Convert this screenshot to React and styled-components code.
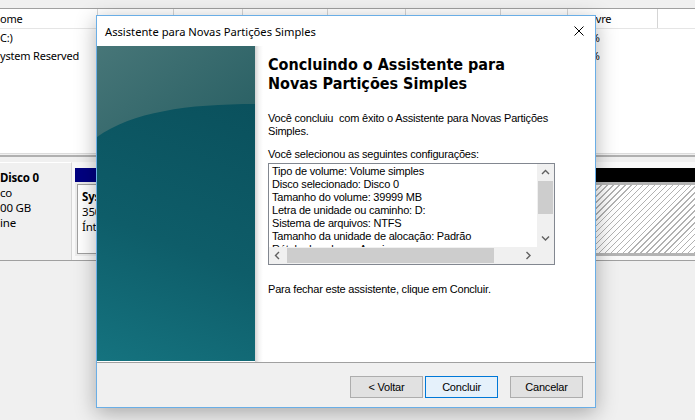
import React from 'react'
import styled, { createGlobalStyle } from 'styled-components'

const GlobalStyle = createGlobalStyle`
  html, body { margin: 0; padding: 0; background: #f0f0f0; }
  body { font-family: "Noto Sans", "Open Sans", sans-serif; }
`

const cols = '98px 76px 69px 85px 78px 95px 67px 90px 1fr'

const Screen = styled.div`
  position: relative;
  width: 695px;
  height: 420px;
  overflow: hidden;
  background: #f0f0f0;
  font-family: "Noto Sans", sans-serif;
  font-size: 11px;
  letter-spacing: -0.2px;
  color: #000;
`

const TopStrip = styled.div`
  height: 8px;
  background: #f0f0f0;
`

const HeaderRow = styled.div`
  display: grid;
  grid-template-columns: ${cols};
  height: 19px;
  background: #fff;
  border-top: 1px solid #a0a0a0;
  border-bottom: 1px solid #e5e5e5;
`

const Cell = styled.div`
  border-right: ${p => (p.$line ? '1px solid #d5d5d5' : 'none')};
  padding-left: ${p => p.$pad || 0}px;
  line-height: ${p => p.$h || 19}px;
  white-space: nowrap;
  overflow: hidden;
`

const ListBody = styled.div`
  height: 124px;
  background: #fff;
`

const Row = styled.div`
  display: grid;
  grid-template-columns: ${cols};
  height: 18px;
`

const Splitter = styled.div`
  height: 9px;
  box-sizing: border-box;
  border-top: 1px solid #dcdcdc;
  padding-top: 1px;
  &::before {
    content: '';
    display: block;
    height: 2px;
    background: #b0b0b0;
  }
`

const DiskRow = styled.div`
  display: flex;
  height: 98px;
  border-bottom: 1px solid #a0a0a0;
`

const DiskInfo = styled.div`
  width: 72px;
  box-sizing: border-box;
  border-right: 1px solid #d6d6d6;
  border-top: 1px solid #fff;
  padding-top: 7px;
  line-height: 15px;
  font-size: 11.5px;
`

const Bold = styled.div`
  font-weight: bold;
`

const Partitions = styled.div`
  flex: 1;
  display: flex;
  padding: 6px 0 4px 3px;
  background: #f9f9f9;
`

const Partition = styled.div`
  display: flex;
  flex-direction: column;
  width: ${p => (p.$w ? `${p.$w}px` : 'auto')};
  flex: ${p => (p.$w ? 'none' : 1)};
  overflow: hidden;
`

const PartBar = styled.div`
  height: 14px;
  background: ${p => p.$color};
`

const PartBody = styled.div`
  flex: 1;
  display: flex;
  padding: 2px;
  background: #ececec;
`

const PartContent = styled.div`
  flex: 1;
  border: 1px solid #a0a0a0;
  background: #fff;
  padding: 4px 4px 0;
  line-height: 15px;
  font-size: 11.5px;
  white-space: nowrap;
  overflow: hidden;
`

const Hatch = styled.div`
  flex: 1;
  border-top: 3px solid #b4b4b4;
  border-bottom: 3px solid #b4b4b4;
  background: repeating-linear-gradient(135deg, #b2b2b2 0 1px, #fff 1px 4.2px);
`

/* dialog */

const Dialog = styled.div`
  position: absolute;
  left: 96px;
  top: 15px;
  width: 500px;
  height: 393px;
  box-sizing: border-box;
  border: 1px solid #6aaee6;
  background: #fff;
  box-shadow: 0 5px 20px rgba(0, 0, 0, 0.3);
  display: flex;
  flex-direction: column;
  letter-spacing: 0;
`

const TitleBar = styled.div`
  height: 30px;
  display: flex;
  align-items: center;
  justify-content: space-between;
  padding: 0 11px 0 8px;
  font-family: "Noto Sans", sans-serif;
  font-size: 11.2px;
`

const Body = styled.div`
  flex: 1;
  display: flex;
  min-height: 0;
`

const Banner = styled.div`
  width: 158px;
  flex: none;
  svg { display: block; }
`

const Content = styled.div`
  flex: 1;
  padding: 9px 12px 0 13px;
  background: linear-gradient(to right, #d4d4d4, #f4f4f4 4px, #fff 8px);
  font-family: "Liberation Sans", Arial, sans-serif;
  font-size: 11px;
  letter-spacing: -0.2px;
  line-height: 13px;
`

const Heading = styled.h1`
  margin: 0;
  font-family: "DejaVu Sans Condensed", "DejaVu Sans", Verdana, sans-serif;
  font-stretch: semi-condensed;
  font-weight: bold;
  font-size: 16px;
  line-height: 19px;
  letter-spacing: 0;
`

const Text = styled.p`
  margin: ${p => p.$top || 0}px 0 0;
`

const ListBox = styled.div`
  margin-top: 2px;
  width: 287px;
  height: 102px;
  box-sizing: border-box;
  border: 1px solid #828790;
  display: grid;
  grid-template-columns: 1fr 17px;
  grid-template-rows: 1fr 17px;
`

const ListText = styled.div`
  overflow: hidden;
  padding: 1px 3px 0;
  white-space: nowrap;
`

const VScroll = styled.div`
  background: #f0f0f0;
  display: flex;
  flex-direction: column;
`

const HScroll = styled.div`
  background: #f0f0f0;
  display: flex;
`

const Arrow = styled.div`
  width: 17px;
  height: 17px;
  flex: none;
  display: flex;
  align-items: center;
  justify-content: center;
`

const VThumb = styled.div`
  height: 33px;
  margin: 0 1px;
  background: #cdcdcd;
`

const HThumb = styled.div`
  width: 207px;
  margin: 1px 0 1px 1px;
  background: #cdcdcd;
`

const Spacer = styled.div`
  flex: 1;
`

const Corner = styled.div`
  background: #f0f0f0;
`

const Footer = styled.div`
  height: 45px;
  flex: none;
  box-sizing: border-box;
  border-top: 1px solid #a0a0a0;
  background: #f0f0f0;
  display: flex;
  justify-content: flex-end;
  align-items: flex-start;
  padding: 13px 12px 0 0;
`

const Button = styled.button`
  width: 73px;
  height: 22px;
  box-sizing: border-box;
  margin-left: ${p => p.$gap || 0}px;
  padding: 0;
  border: 1px solid ${p => (p.$primary ? '#0078d7' : '#adadad')};
  background: ${p => (p.$primary ? '#e5f1fb' : '#e1e1e1')};
  font-family: "Liberation Sans", Arial, sans-serif;
  font-size: 11px;
  letter-spacing: -0.2px;
  color: #000;
`

const Chevron = ({ dir }) => {
  const pts = {
    up: '1,5 4.5,1.5 8,5',
    down: '1,1.5 4.5,5 8,1.5',
    left: '5,1 1.5,4.5 5,8',
    right: '1.5,1 5,4.5 1.5,8',
  }[dir]
  const vertical = dir === 'up' || dir === 'down'
  return (
    <svg width={vertical ? 9 : 7} height={vertical ? 7 : 9} viewBox={vertical ? '0 0 9 7' : '0 0 7 9'}>
      <polyline points={pts} fill="none" stroke="#606060" strokeWidth="1.4" />
    </svg>
  )
}

const TealArt = () => (
  <svg width="158" height="315" viewBox="0 0 158 315">
    <defs>
      <linearGradient id="tealBase" x1="0.2" y1="0" x2="0" y2="1">
        <stop offset="0" stopColor="#0a505c" />
        <stop offset="0.55" stopColor="#0e5d69" />
        <stop offset="1" stopColor="#15737f" />
      </linearGradient>
      <linearGradient id="tealTop" x1="0" y1="0" x2="1" y2="0.7">
        <stop offset="0" stopColor="#477678" />
        <stop offset="1" stopColor="#2b6165" />
      </linearGradient>
    </defs>
    <rect width="158" height="315" fill="url(#tealBase)" />
    <path d="M0 0H158V58C90 58 35 66 0 91Z" fill="url(#tealTop)" />
  </svg>
)

const lines = [
  'Tipo de volume: Volume simples',
  'Disco selecionado: Disco 0',
  'Tamanho do volume: 39999 MB',
  'Letra de unidade ou caminho: D:',
  'Sistema de arquivos: NTFS',
  'Tamanho da unidade de alocação: Padrão',
  'Rótulo do volume: Arquivos',
]

export default function App() {
  return (
    <Screen>
      <GlobalStyle />
      <TopStrip />
      <HeaderRow>
        <Cell $line>ome</Cell>
        <Cell $line />
        <Cell $line />
        <Cell $line />
        <Cell $line />
        <Cell $line />
        <Cell $line />
        <Cell $line $pad={8}>% Livre</Cell>
        <Cell />
      </HeaderRow>
      <ListBody>
        <Row>
          <Cell $h={18}>C:)</Cell>
          <Cell /><Cell /><Cell /><Cell /><Cell /><Cell />
          <Cell $h={18} $pad={8}>96 %</Cell>
          <Cell />
        </Row>
        <Row>
          <Cell $h={18}>ystem Reserved</Cell>
          <Cell /><Cell /><Cell /><Cell /><Cell /><Cell />
          <Cell $h={18} $pad={8}>92 %</Cell>
          <Cell />
        </Row>
      </ListBody>
      <Splitter />
      <DiskRow>
        <DiskInfo>
          <Bold>Disco 0</Bold>
          <div>co</div>
          <div>00 GB</div>
          <div>ine</div>
        </DiskInfo>
        <Partitions>
          <Partition $w={40}>
            <PartBar $color="#000080" />
            <PartBody>
              <PartContent>
                <Bold>System</Bold>
                <div>350 MB</div>
                <div>Íntegro</div>
              </PartContent>
            </PartBody>
          </Partition>
          <Partition>
            <PartBar $color="#000080" />
            <PartBody>
              <PartContent />
            </PartBody>
          </Partition>
          <Partition $w={100}>
            <PartBar $color="#000" />
            <Hatch />
          </Partition>
        </Partitions>
      </DiskRow>

      <Dialog>
        <TitleBar>
          <span>Assistente para Novas Partições Simples</span>
          <svg width="10" height="10" viewBox="0 0 10 10">
            <path d="M0.5 0.5L9.5 9.5M9.5 0.5L0.5 9.5" stroke="#000" strokeWidth="1" />
          </svg>
        </TitleBar>
        <Body>
          <Banner>
            <TealArt />
          </Banner>
          <Content>
            <Heading>
              Concluindo o Assistente para
              <br />
              Novas Partições Simples
            </Heading>
            <Text $top={19}>
              Você concluiu&nbsp; com êxito o Assistente para Novas Partições Simples.
            </Text>
            <Text $top={10}>Você selecionou as seguintes configurações:</Text>
            <ListBox>
              <ListText>
                {lines.map(l => (
                  <div key={l}>{l}</div>
                ))}
              </ListText>
              <VScroll>
                <Arrow><Chevron dir="up" /></Arrow>
                <VThumb />
                <Spacer />
                <Arrow><Chevron dir="down" /></Arrow>
              </VScroll>
              <HScroll>
                <Arrow><Chevron dir="left" /></Arrow>
                <HThumb />
                <Spacer />
                <Arrow><Chevron dir="right" /></Arrow>
              </HScroll>
              <Corner />
            </ListBox>
            <Text $top={18}>Para fechar este assistente, clique em Concluir.</Text>
          </Content>
        </Body>
        <Footer>
          <Button>&lt; Voltar</Button>
          <Button $primary $gap={2}>Concluir</Button>
          <Button $gap={12}>Cancelar</Button>
        </Footer>
      </Dialog>
    </Screen>
  )
}
